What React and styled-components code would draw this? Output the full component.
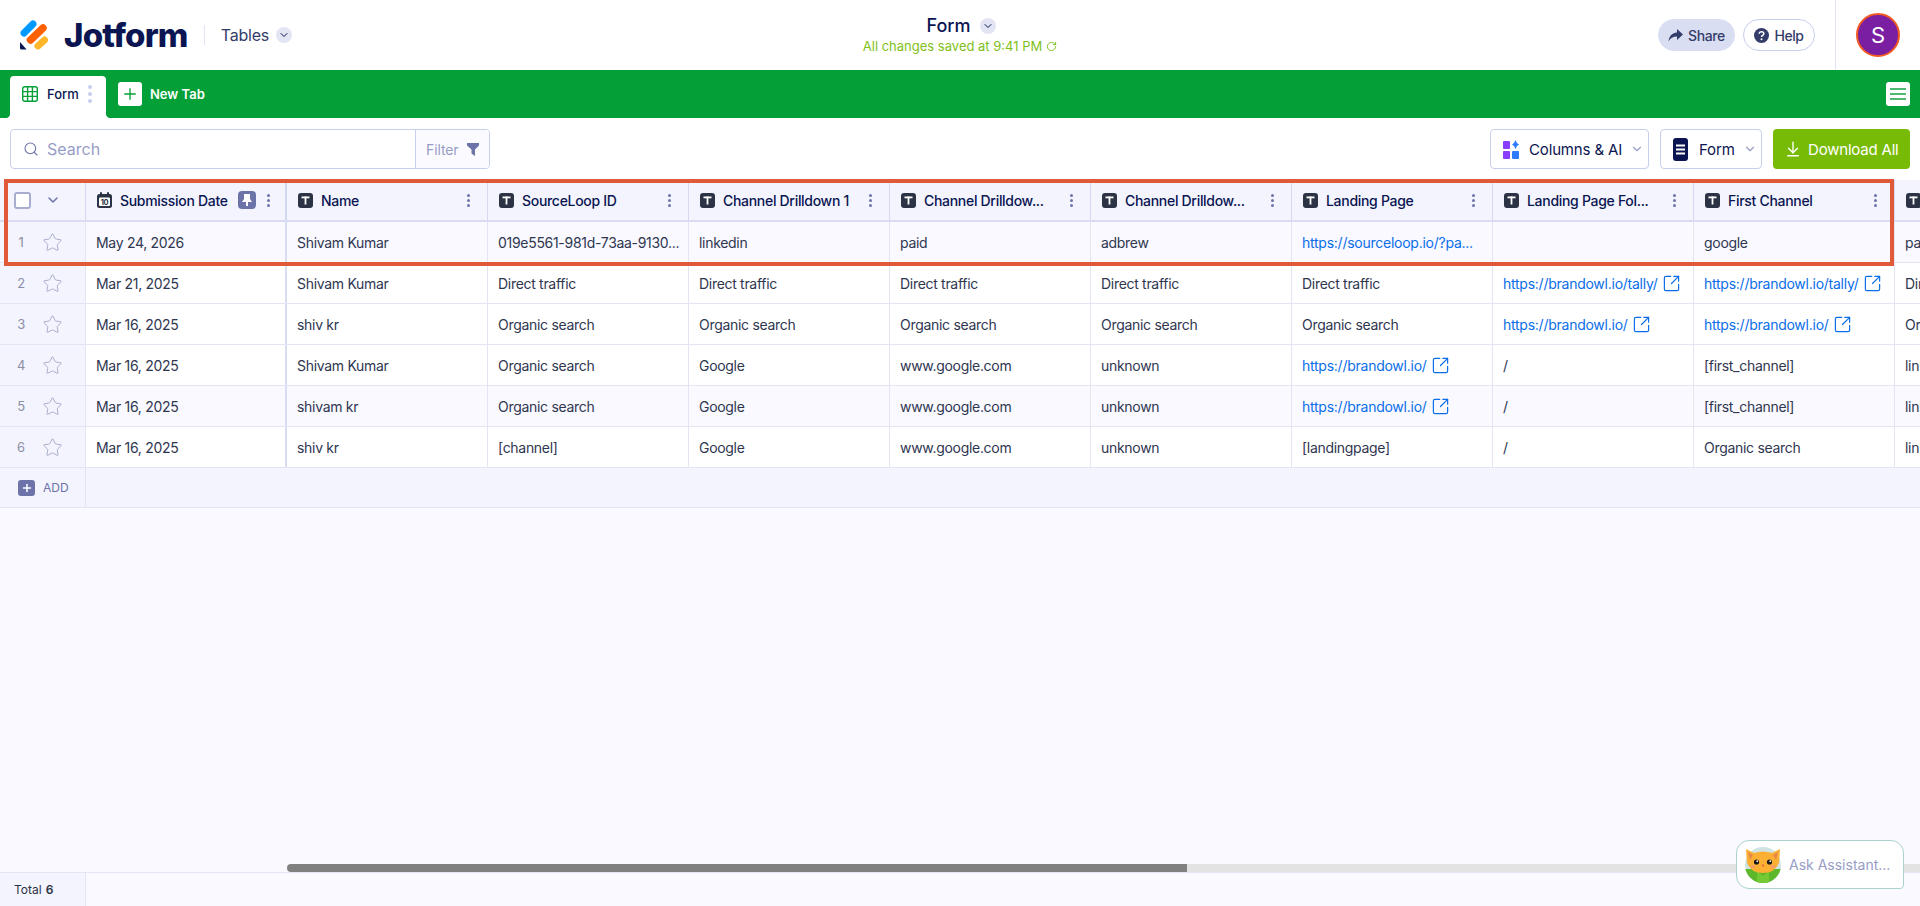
import React from 'react';
import styled, { createGlobalStyle } from 'styled-components';
import { Star, SquareArrowOutUpRight, ChevronDown, Search, Plus, ArrowDownToLine, RotateCw } from 'lucide-react';

const GlobalStyle = createGlobalStyle`
  html, body { margin: 0; padding: 0; height: 100%; }
  body { font-family: Inter, "Liberation Sans", sans-serif; background: #f9f9ff; color: #2c3345; }
  * { box-sizing: border-box; }
`;

const COLUMNS = [
  { name: 'Name' },
  { name: 'SourceLoop ID' },
  { name: 'Channel Drilldown 1' },
  { name: 'Channel Drilldow...' },
  { name: 'Channel Drilldow...' },
  { name: 'Landing Page' },
  { name: 'Landing Page Fol...' },
  { name: 'First Channel' },
  { name: '' },
];

const link = (text, icon = true) => ({ href: text, icon });

const ROWS = [
  { tint: true, date: 'May 24, 2026', cells: ['Shivam Kumar', '019e5561-981d-73aa-9130...', 'linkedin', 'paid', 'adbrew', link('https://sourceloop.io/?pa...', false), '', 'google', 'paid'] },
  { date: 'Mar 21, 2025', cells: ['Shivam Kumar', 'Direct traffic', 'Direct traffic', 'Direct traffic', 'Direct traffic', 'Direct traffic', link('https://brandowl.io/tally/'), link('https://brandowl.io/tally/'), 'Direct traffic'] },
  { date: 'Mar 16, 2025', cells: ['shiv kr', 'Organic search', 'Organic search', 'Organic search', 'Organic search', 'Organic search', link('https://brandowl.io/'), link('https://brandowl.io/'), 'Organic search'] },
  { date: 'Mar 16, 2025', cells: ['Shivam Kumar', 'Organic search', 'Google', 'www.google.com', 'unknown', link('https://brandowl.io/'), '/', '[first_channel]', 'linkedin'] },
  { tint: true, date: 'Mar 16, 2025', cells: ['shivam kr', 'Organic search', 'Google', 'www.google.com', 'unknown', link('https://brandowl.io/'), '/', '[first_channel]', 'linkedin'] },
  { date: 'Mar 16, 2025', cells: ['shiv kr', '[channel]', 'Google', 'www.google.com', 'unknown', '[landingpage]', '/', 'Organic search', 'linkedin'] },
];

const Page = styled.div`
  display: flex;
  flex-direction: column;
  height: 906px;
  width: 1920px;
  overflow: hidden;
  position: relative;
`;

const TopBar = styled.header`
  display: grid;
  grid-template-columns: 1fr auto 1fr;
  height: 70px;
  background: #fff;
`;

const Brand = styled.div`
  display: flex;
  align-items: center;
  padding-left: 20px;
`;

const Wordmark = styled.span`
  font-size: 33px;
  font-weight: 800;
  color: #0a1551;
  letter-spacing: -0.8px;
  margin-left: 16px;
  line-height: 1;
`;

const BrandDivider = styled.span`
  width: 1px;
  height: 20px;
  background: #e3e5f5;
  margin: 0 16px;
`;

const Product = styled.span`
  font-size: 16px;
  letter-spacing: -0.2px;
  color: #343c6a;
`;

const RoundCaret = styled.span`
  display: inline-flex;
  align-items: center;
  justify-content: center;
  width: 16px;
  height: 16px;
  border-radius: 50%;
  background: #e3e5f5;
  color: #0a1551;
  margin-left: ${(p) => p.$gap || 7}px;
`;

const Center = styled.div`
  display: flex;
  flex-direction: column;
  align-items: center;
  padding-top: 15px;
`;

const FormTitle = styled.div`
  display: flex;
  align-items: center;
  font-size: 18px;
  font-weight: 500;
  color: #0a1551;
  line-height: 22px;
  margin-left: 2px;
`;

const Saved = styled.div`
  display: flex;
  align-items: center;
  gap: 4px;
  font-size: 13px;
  color: #7fbf19;
  line-height: 18px;
`;

const Actions = styled.div`
  display: flex;
  align-items: center;
  justify-content: flex-end;
  padding-right: 20px;
`;

const Pill = styled.button`
  display: flex;
  align-items: center;
  justify-content: center;
  gap: 5px;
  height: 32px;
  width: ${(p) => p.$width}px;
  margin-left: 8px;
  padding: 0;
  border-radius: 16px;
  border: 1px solid ${(p) => (p.$filled ? '#dadef3' : '#c8ceed')};
  background: ${(p) => (p.$filled ? '#dadef3' : '#fff')};
  color: #343c6a;
  font: 500 14px Inter, sans-serif;
  letter-spacing: -0.4px;
`;

const ActionDivider = styled.span`
  align-self: stretch;
  width: 1px;
  background: #dfe2f3;
  margin: 0 20px;
`;

const Avatar = styled.div`
  display: flex;
  align-items: center;
  justify-content: center;
  width: 44px;
  height: 44px;
  border-radius: 50%;
  background: #7b1fa2;
  border: 2px solid #f15a22;
  color: #fff;
  font-size: 22px;
`;

const TabBar = styled.nav`
  display: flex;
  align-items: flex-end;
  height: 48px;
  padding: 0 10px;
  background: #04a037;
`;

const ActiveTab = styled.div`
  display: flex;
  align-items: center;
  width: 96px;
  height: 42px;
  padding: 0 0 6px 12px;
  background: #fff;
  border-radius: 4px 4px 0 0;
  font-size: 13px;
  font-weight: 500;
  color: #0a1551;
  position: relative;
  &::before, &::after {
    content: '';
    position: absolute;
    bottom: 0;
    width: 5px;
    height: 5px;
  }
  &::before { left: -5px; background: radial-gradient(circle at 0 0, #04a037 5px, #fff 5.5px); }
  &::after { right: -5px; background: radial-gradient(circle at 100% 0, #04a037 5px, #fff 5.5px); }
`;

const TabLabel = styled.span`
  margin-left: 9px;
  width: 41px;
`;

const TabDots = styled.span`
  display: flex;
  flex-direction: column;
  gap: 3px;
  & > i { width: 4px; height: 4px; border-radius: 50%; background: #c8ceed; display: block; }
`;

const NewTab = styled.div`
  display: flex;
  align-items: center;
  gap: 8px;
  align-self: center;
  margin-left: 12px;
  color: #fff;
  font-size: 13px;
  font-weight: 600;
`;

const WhiteSquare = styled.span`
  display: flex;
  align-items: center;
  justify-content: center;
  width: 24px;
  height: 24px;
  border-radius: 3px;
  background: #fff;
  color: #04a037;
`;

const MenuButton = styled(WhiteSquare)`
  margin-left: auto;
  align-self: center;
  flex-direction: column;
  gap: 3px;
  & > i { display: block; width: 16px; height: 2px; background: #4fb96f; }
`;

const Toolbar = styled.div`
  display: flex;
  justify-content: space-between;
  height: 62px;
  padding: 11px 10px;
  background: #fff;
`;

const SearchBox = styled.div`
  display: flex;
  width: 480px;
  height: 40px;
  border: 1px solid #c8ceed;
  border-radius: 4px;
  overflow: hidden;
`;

const SearchField = styled.div`
  flex: 1;
  display: flex;
  align-items: center;
  gap: 8px;
  padding-left: 12px;
  font-size: 16px;
  color: #979dc6;
  & > svg { color: #6c73a8; }
`;

const FilterButton = styled.div`
  display: flex;
  align-items: center;
  gap: 8px;
  width: 74px;
  padding-left: 10px;
  border-left: 1px solid #c8ceed;
  background: #fbfbff;
  font-size: 14px;
  letter-spacing: -0.1px;
  color: #979dc6;
`;

const ToolbarRight = styled.div`
  display: flex;
  gap: 11px;
`;

const OutlineButton = styled.div`
  display: flex;
  align-items: center;
  width: ${(p) => p.$width}px;
  height: 40px;
  padding-left: 12px;
  border: 1px solid #c8ceed;
  border-radius: 4px;
  background: #fff;
  font-size: 15px;
  letter-spacing: -0.15px;
  white-space: nowrap;
  color: #0a1551;
  & > svg:last-child { color: #979dc6; }
`;

const ButtonLabel = styled.span`
  margin: 0 8px 0 ${(p) => p.$gap}px;
`;

const DownloadButton = styled.div`
  display: flex;
  align-items: center;
  gap: 6px;
  width: 137px;
  height: 40px;
  padding-left: 11px;
  border-radius: 4px;
  background: #78bb07;
  color: #fff;
  font-size: 15px;
  letter-spacing: -0.2px;
  white-space: nowrap;
`;

const TableArea = styled.div`
  flex: 1;
  overflow: hidden;
`;

const Row = styled.div`
  display: grid;
  grid-template-columns: 86px repeat(10, 201px);
  height: 41px;
  background: ${(p) => (p.$tint ? '#f9f9ff' : '#fff')};
  border-bottom: 1px solid #e3e5f5;
`;

const HeaderRow = styled(Row)`
  height: 42px;
  background: #f3f4fd;
  border-bottom: 2px solid #d9dcf3;
`;

const Cell = styled.div`
  display: flex;
  align-items: center;
  gap: 6px;
  padding: 0 10px;
  min-width: 0;
  overflow: hidden;
  white-space: nowrap;
  font-size: 14px;
  letter-spacing: -0.3px;
  color: #2f3650;
  border-right: 1px solid #e3e5f5;
  ${(p) => p.$pinned && 'border-right: 2px solid #d9dcf3;'}
`;

const HeaderCell = styled(Cell)`
  padding: 0 ${(p) => (p.$pinned ? 9 : 11)}px 0 11px;
  gap: 8px;
  font-weight: 500;
  color: #0a1551;
  border-right-color: #d4d8f2;
`;

const HeaderLabel = styled.span`
  flex: 1;
  min-width: 0;
`;

const GutterHead = styled(Cell)`
  padding: 0 0 0 14px;
  gap: 14px;
  background: #f3f4fd;
  border-right-color: #d4d8f2;
  color: #6c73a8;
`;

const Gutter = styled(Cell)`
  padding: 0;
  gap: 5px;
  background: #f3f4fd;
`;

const RowNumber = styled.span`
  width: 37px;
  padding-left: 5px;
  text-align: center;
  font-size: 13px;
  color: #8d8fa8;
`;

const Checkbox = styled.span`
  width: 17px;
  height: 17px;
  background: #fff;
  border: 2px solid #a9aed0;
  border-radius: 3px;
`;

const PinBadge = styled.span`
  display: flex;
  align-items: center;
  justify-content: center;
  flex: none;
  width: 18px;
  height: 18px;
  border-radius: 4px;
  background: #6c73a8;
  margin-right: 3px;
`;

const Kebab = styled.span`
  display: flex;
  flex: none;
  flex-direction: column;
  gap: 2px;
  width: 3px;
  margin-right: 6px;
  & > i { display: block; width: 3px; height: 3px; border-radius: 50%; background: #6c73a8; }
`;

const LinkText = styled.a`
  display: inline-flex;
  align-items: center;
  gap: 4px;
  letter-spacing: -0.25px;
  color: #0a6ee8;
`;

const AddRow = styled(Row)`
  grid-template-columns: 86px 1fr;
  height: 40px;
  background: #f3f4fd;
`;

const AddCell = styled(Cell)`
  padding-left: 18px;
  gap: 8px;
  font-size: 12px;
  letter-spacing: 0;
  color: #6c73a8;
`;

const AddBadge = styled.span`
  display: flex;
  align-items: center;
  justify-content: center;
  width: 17px;
  height: 16px;
  border-radius: 3px;
  background: #6c73a8;
  color: #fff;
`;

const ScrollRow = styled.div`
  display: flex;
  height: 8px;
  padding-left: 287px;
`;

const ScrollThumb = styled.div`
  width: 900px;
  background: #808080;
  border-radius: 4px 0 0 4px;
`;

const ScrollTrack = styled.div`
  flex: 1;
  background: #e3e3e3;
`;

const Footer = styled.footer`
  display: flex;
  height: 34px;
  border-top: 1px solid #e3e5f5;
`;

const TotalCell = styled.div`
  display: flex;
  align-items: center;
  gap: 4px;
  width: 86px;
  padding-left: 14px;
  background: #f3f4fd;
  border-right: 1px solid #e3e5f5;
  font-size: 12px;
  color: #2c3345;
  & > b { font-weight: 600; }
`;

const Highlight = styled.div`
  position: absolute;
  left: 4px;
  top: 179px;
  width: 1890px;
  height: 87px;
  border: 4px solid #e05a3a;
  pointer-events: none;
`;

const Assistant = styled.div`
  position: absolute;
  left: 1736px;
  top: 840px;
  display: flex;
  align-items: center;
  gap: 8px;
  width: 168px;
  height: 49px;
  padding-left: 8px;
  background: #fff;
  border: 1px solid #a9d3cd;
  border-radius: 13px 13px 4px 13px;
  font-size: 14px;
  color: #979dc6;
`;

const TIcon = () => (
  <svg width="15" height="15" viewBox="0 0 15 15" style={{ flex: 'none' }}>
    <rect width="15" height="15" rx="3" fill="#2c3345" />
    <rect x="3.5" y="3.5" width="8" height="1.8" fill="#fff" />
    <rect x="6.6" y="3.5" width="1.8" height="8" fill="#fff" />
  </svg>
);

const CalendarIcon = () => (
  <svg width="15" height="16" viewBox="0 0 15 16" style={{ flex: 'none' }}>
    <rect y="2" width="15" height="14" rx="2.5" fill="#2c3345" />
    <rect x="3" width="2" height="4" rx="1" fill="#2c3345" />
    <rect x="10" width="2" height="4" rx="1" fill="#2c3345" />
    <rect x="2" y="5.5" width="11" height="8.5" rx="1" fill="#fff" />
    <text x="7.5" y="12.8" textAnchor="middle" fontSize="7.5" fontWeight="700" fontFamily="Inter, sans-serif" fill="#2c3345">10</text>
  </svg>
);

const KebabIcon = () => (
  <Kebab>
    <i />
    <i />
    <i />
  </Kebab>
);

const Logo = () => (
  <svg width="28" height="30" viewBox="0 0 28 30" style={{ flex: 'none' }} fill="none" strokeLinecap="round">
    <path d="M4 13 L13 4" stroke="#0099ff" strokeWidth="7" />
    <path d="M10.5 20 L23 8" stroke="#ff6100" strokeWidth="7.5" />
    <path d="M18 26 L24.5 20" stroke="#ffb629" strokeWidth="7" />
    <path d="M0 22 L6.6 29.6 L1.5 29.6 Q0 29.6 0 28 Z" fill="#0a1551" />
  </svg>
);

const CatAvatar = () => (
  <svg width="36" height="36" viewBox="0 0 36 36" style={{ flex: 'none' }}>
    <defs>
      <clipPath id="catClip">
        <circle cx="18" cy="18" r="18" />
      </clipPath>
    </defs>
    <g clipPath="url(#catClip)">
      <rect width="36" height="36" fill="#cfe3e4" />
      <rect y="22" width="36" height="14" fill="#5cb82a" />
      <path d="M12 24 L18 29 L24 24 L24 36 L12 36 Z" fill="#74c935" />
    </g>
    <path d="M1 2 L9 6 Q18 3 27 6 L35 2 L34 16 Q30 26 18 26 Q6 26 2 16 Z" fill="#fbb034" />
    <path d="M3 5 L8 8 L5 13 Z" fill="#e8864a" />
    <path d="M33 5 L28 8 L31 13 Z" fill="#e8864a" />
    <circle cx="11.5" cy="15" r="2.6" fill="#1a1a1a" />
    <circle cx="24.5" cy="15" r="2.6" fill="#1a1a1a" />
    <circle cx="12.3" cy="14.2" r="0.9" fill="#fff" />
    <circle cx="25.3" cy="14.2" r="0.9" fill="#fff" />
    <ellipse cx="18" cy="18.5" rx="1.2" ry="0.9" fill="#e5604a" />
    <ellipse cx="8" cy="19.5" rx="2.5" ry="1.5" fill="#f59a6a" />
    <ellipse cx="28" cy="19.5" rx="2.5" ry="1.5" fill="#f59a6a" />
  </svg>
);

const TableCell = ({ value }) => {
  if (typeof value === 'object') {
    return (
      <Cell>
        <LinkText>
          {value.href}
          {value.icon && <SquareArrowOutUpRight size={19} strokeWidth={1.5} />}
        </LinkText>
      </Cell>
    );
  }
  return <Cell>{value}</Cell>;
};

export default function App() {
  return (
    <Page>
      <GlobalStyle />
      <TopBar>
        <Brand>
          <Logo />
          <Wordmark>Jotform</Wordmark>
          <BrandDivider />
          <Product>Tables</Product>
          <RoundCaret>
            <ChevronDown size={12} />
          </RoundCaret>
        </Brand>
        <Center>
          <FormTitle>
            Form
            <RoundCaret $gap={9}>
              <ChevronDown size={12} />
            </RoundCaret>
          </FormTitle>
          <Saved>
            All changes saved at 9:41 PM
            <RotateCw size={11} />
          </Saved>
        </Center>
        <Actions>
          <Pill $filled $width={77}>
            <svg width="15" height="13" viewBox="0 0 15 13">
              <path d="M9 0 L15 5.5 L9 11 V7.6 C5 7.6 2.4 9 0.4 12.6 C1 7.6 3.6 3.8 9 3.4 Z" fill="#343c6a" />
            </svg>
            Share
          </Pill>
          <Pill $width={72}>
            <svg width="15" height="15" viewBox="0 0 15 15">
              <circle cx="7.5" cy="7.5" r="7.5" fill="#343c6a" />
              <path d="M5.2 5.7 C5.4 3 9.8 3 9.8 5.7 C9.8 7.4 7.5 7.3 7.5 9" fill="none" stroke="#fff" strokeWidth="1.5" />
              <circle cx="7.5" cy="11.2" r="1" fill="#fff" />
            </svg>
            Help
          </Pill>
          <ActionDivider />
          <Avatar>S</Avatar>
        </Actions>
      </TopBar>

      <TabBar>
        <ActiveTab>
          <svg width="16" height="16" viewBox="0 0 16 16" fill="none" stroke="#04a037" strokeWidth="1.4">
            <rect x="0.7" y="0.7" width="14.6" height="14.6" rx="2" />
            <path d="M5.6 1 V15 M10.4 1 V15 M1 5.6 H15 M1 10.4 H15" />
          </svg>
          <TabLabel>Form</TabLabel>
          <TabDots>
            <i />
            <i />
            <i />
          </TabDots>
        </ActiveTab>
        <NewTab>
          <WhiteSquare>
            <Plus size={18} strokeWidth={1.8} />
          </WhiteSquare>
          New Tab
        </NewTab>
        <MenuButton>
          <i />
          <i />
          <i />
        </MenuButton>
      </TabBar>

      <Toolbar>
        <SearchBox>
          <SearchField>
            <Search size={16} strokeWidth={1.6} />
            Search
          </SearchField>
          <FilterButton>
            Filter
            <svg width="12" height="13" viewBox="0 0 12 13">
              <path d="M0 0 H12 V2.5 L8 6.5 V13 L4.5 10.5 V6.5 L0 2.5 Z" fill="#6c73a8" />
            </svg>
          </FilterButton>
        </SearchBox>
        <ToolbarRight>
          <OutlineButton $width={159}>
            <svg width="16" height="19" viewBox="0 0 16 19" style={{ flex: 'none' }}>
              <rect y="1" width="7" height="8" rx="1" fill="#8b3dff" />
              <rect y="11" width="7" height="8" rx="1" fill="#8b3dff" />
              <rect x="9" y="11" width="7" height="8" rx="1" fill="#2f7bff" />
              <path d="M12.5 0 L14 3 L16 4.5 L14 6 L12.5 9 L11 6 L9 4.5 L11 3 Z" fill="#2f7bff" />
            </svg>
            <ButtonLabel $gap={10}>Columns &amp; AI</ButtonLabel>
            <ChevronDown size={14} />
          </OutlineButton>
          <OutlineButton $width={102}>
            <svg width="15" height="23" viewBox="0 0 15 23" style={{ flex: 'none' }}>
              <rect width="15" height="23" rx="3" fill="#0a1551" />
              <rect x="3" y="6.5" width="9" height="2" fill="#fff" />
              <rect x="3" y="10.5" width="9" height="2" fill="#fff" />
              <rect x="3" y="14.5" width="9" height="2" fill="#fff" />
            </svg>
            <ButtonLabel $gap={11}>Form</ButtonLabel>
            <ChevronDown size={14} />
          </OutlineButton>
          <DownloadButton>
            <ArrowDownToLine size={18} strokeWidth={1.8} />
            Download All
          </DownloadButton>
        </ToolbarRight>
      </Toolbar>

      <TableArea>
        <HeaderRow>
          <GutterHead>
            <Checkbox />
            <ChevronDown size={16} strokeWidth={2.2} />
          </GutterHead>
          <HeaderCell $pinned>
            <CalendarIcon />
            <HeaderLabel>Submission Date</HeaderLabel>
            <PinBadge>
              <svg width="10" height="12" viewBox="0 0 10 12">
                <path d="M2 0 H8 V5 L10 8 H6 V12 H4 V8 H0 L2 5 Z" fill="#fff" />
              </svg>
            </PinBadge>
            <KebabIcon />
          </HeaderCell>
          {COLUMNS.map((col, i) => (
            <HeaderCell key={i}>
              <TIcon />
              <HeaderLabel>{col.name}</HeaderLabel>
              <KebabIcon />
            </HeaderCell>
          ))}
        </HeaderRow>
        {ROWS.map((row, i) => (
          <Row key={i} $tint={row.tint}>
            <Gutter>
              <RowNumber>{i + 1}</RowNumber>
              <Star size={21} strokeWidth={1} color="#9ea3c4" />
            </Gutter>
            <Cell $pinned>{row.date}</Cell>
            {row.cells.map((value, j) => (
              <TableCell key={j} value={value} />
            ))}
          </Row>
        ))}
        <AddRow>
          <AddCell>
            <AddBadge>
              <Plus size={12} strokeWidth={3} />
            </AddBadge>
            ADD
          </AddCell>
        </AddRow>
      </TableArea>

      <ScrollRow>
        <ScrollThumb />
        <ScrollTrack />
      </ScrollRow>
      <Footer>
        <TotalCell>
          Total <b>6</b>
        </TotalCell>
      </Footer>

      <Highlight />
      <Assistant>
        <CatAvatar />
        Ask Assistant...
      </Assistant>
    </Page>
  );
}
